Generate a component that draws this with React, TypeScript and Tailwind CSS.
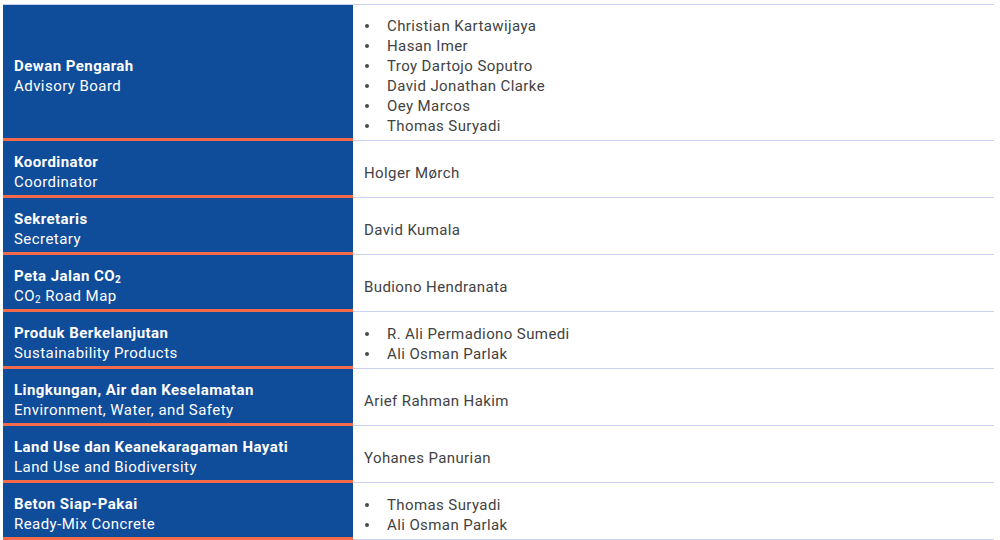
import type { ReactNode } from "react"

type Row = {
  id: string
  en: ReactNode
  people: string[]
}

const Sub2 = () => <sub className="text-[10px] leading-none relative top-[2px]">2</sub>

const rows: Row[] = [
  {
    id: "Dewan Pengarah",
    en: "Advisory Board",
    people: [
      "Christian Kartawijaya",
      "Hasan Imer",
      "Troy Dartojo Soputro",
      "David Jonathan Clarke",
      "Oey Marcos",
      "Thomas Suryadi",
    ],
  },
  { id: "Koordinator", en: "Coordinator", people: ["Holger Mørch"] },
  { id: "Sekretaris", en: "Secretary", people: ["David Kumala"] },
  {
    id: "co2",
    en: (
      <>
        CO<Sub2 /> Road Map
      </>
    ),
    people: ["Budiono Hendranata"],
  },
  {
    id: "Produk Berkelanjutan",
    en: "Sustainability Products",
    people: ["R. Ali Permadiono Sumedi", "Ali Osman Parlak"],
  },
  {
    id: "Lingkungan, Air dan Keselamatan",
    en: "Environment, Water, and Safety",
    people: ["Arief Rahman Hakim"],
  },
  {
    id: "Land Use dan Keanekaragaman Hayati",
    en: "Land Use and Biodiversity",
    people: ["Yohanes Panurian"],
  },
  {
    id: "Beton Siap-Pakai",
    en: "Ready-Mix Concrete",
    people: ["Thomas Suryadi", "Ali Osman Parlak"],
  },
]

function Title({ row }: { row: Row }) {
  if (row.id === "co2") {
    return (
      <>
        Peta Jalan CO<Sub2 />
      </>
    )
  }
  return <>{row.id}</>
}

export default function App() {
  return (
    <div className="w-[1000px] h-[540px] bg-white font-['Roboto',_'Liberation_Sans',_sans-serif] text-[15px] leading-[20px]">
      <div className="ml-[3px] pt-[4px] w-[991px]">
        <div className="grid grid-cols-[350px_641px] border-t border-[#cdd0ee]">
          {rows.map((row, i) => (
            <div key={row.id} className="contents">
              {/* Left - unit name */}
              <div className="bg-[#0f4c9a] border-b-[3px] border-[#f26b4a] px-[11px] pt-[11px] pb-[3px] flex flex-col justify-center text-white tracking-[0.45px]">
                <div className="font-bold">
                  <Title row={row} />
                </div>
                <div>{row.en}</div>
              </div>

              {/* Right - members */}
              <div
                className={`border-b border-[#cdd0ee] px-[11px] pt-[11px] flex flex-col justify-center text-[#424242] tracking-[0.4px] ${
                  i === 0 ? "pb-[4px]" : "pb-[3px]"
                }`}
              >
                {row.people.length > 1 ? (
                  <ul>
                    {row.people.map((p) => (
                      <li key={p} className="flex items-center">
                        <span className="w-[23px] pl-[1px] flex">
                          <span className="w-[4px] h-[4px] rounded-full bg-[#4a4a4a]" />
                        </span>
                        <span>{p}</span>
                      </li>
                    ))}
                  </ul>
                ) : (
                  <div>{row.people[0]}</div>
                )}
              </div>
            </div>
          ))}
        </div>
      </div>
    </div>
  )
}
